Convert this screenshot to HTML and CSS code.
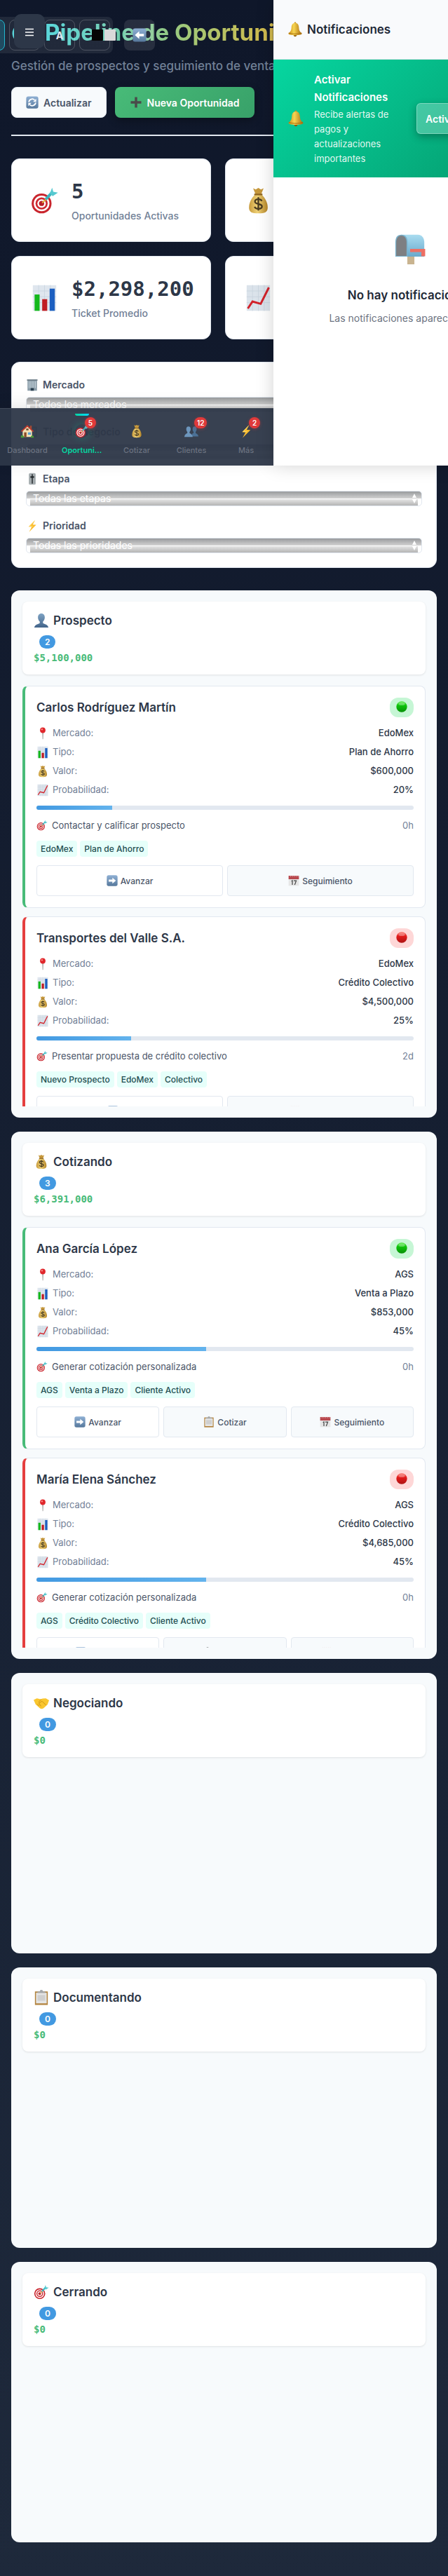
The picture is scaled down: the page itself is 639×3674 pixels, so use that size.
FILE: index.html
```html
<!DOCTYPE html>
<html lang="es">
<head>
<meta charset="utf-8">
<meta name="viewport" content="width=device-width, initial-scale=1">
<title>Pipeline de Oportunidades</title>
<link rel="stylesheet" href="styles.css">
</head>
<body>
<svg class="sprite" aria-hidden="true">
  <defs>
    <linearGradient id="g-blue" x1="0" y1="0" x2="0" y2="1"><stop offset="0" stop-color="#8fb0d4"/><stop offset="1" stop-color="#56789c"/></linearGradient>
    <linearGradient id="g-person" x1="0" y1="0" x2="0" y2="1"><stop offset="0" stop-color="#7fa3c4"/><stop offset="1" stop-color="#42648a"/></linearGradient>
    <linearGradient id="g-gold" x1="0" y1="0" x2="1" y2="0"><stop offset="0" stop-color="#c98a12"/><stop offset=".4" stop-color="#f7d552"/><stop offset="1" stop-color="#a96a0c"/></linearGradient>
    <linearGradient id="g-bag" x1="0" y1="0" x2="1" y2="0"><stop offset="0" stop-color="#c79a3c"/><stop offset=".45" stop-color="#f0d277"/><stop offset="1" stop-color="#b58528"/></linearGradient>
    <linearGradient id="g-green" x1="0" y1="0" x2="0" y2="1"><stop offset="0" stop-color="#4be83c"/><stop offset=".4" stop-color="#0cc20a"/><stop offset="1" stop-color="#089008"/></linearGradient>
    <linearGradient id="g-red" x1="0" y1="0" x2="0" y2="1"><stop offset="0" stop-color="#f86a60"/><stop offset=".4" stop-color="#e11a1a"/><stop offset="1" stop-color="#ad1414"/></linearGradient>
    <linearGradient id="g-box" x1="0" y1="0" x2="0" y2="1"><stop offset="0" stop-color="#a9dcf0"/><stop offset="1" stop-color="#6aa9cc"/></linearGradient>
  </defs>
  <symbol id="target" viewBox="0 0 24 24">
    <circle cx="9.500" cy="14.500" r="8.500" fill="#c9252d"/><circle cx="9.500" cy="14.500" r="6.700" fill="#fff"/><circle cx="9.500" cy="14.500" r="5.200" fill="#cf2a31"/><circle cx="9.500" cy="14.500" r="3.600" fill="#fff"/><circle cx="9.500" cy="14.500" r="2.200" fill="#b81f27"/>
    <path d="M10 14L16 8.500" stroke="#e0b040" stroke-width="1.200"/><path d="M13 11l5.500-6" stroke="#3bb3bd" stroke-width="2.400"/><path d="M16.500 6L18.500 1l1 3.500 4 .7-4.500 3z" fill="#56c9d0"/>
  </symbol>
  <symbol id="target-flat" viewBox="0 0 24 24"><circle cx="9.500" cy="13" r="8.500" fill="#4dd4d8"/><path d="M13 11L18 5l1-3 1 2.500 3 1-4 3-5 5z" fill="#4dd4d8"/></symbol>
  <symbol id="bag" viewBox="0 0 24 24">
    <path d="M7.500 1.500l2.300 1 2.200-1.300 2.200 1.300 2.300-1-2 5h-5z" fill="#c6983c"/><path d="M9 7h6c3 3 5 7 5 11 0 4-2.500 5-8 5s-8-1-8-5c0-4 2-8 5-11z" fill="url(#g-bag)"/><path d="M8.500 6.800h7" stroke="#8e6420" stroke-width="1.400"/>
    <path d="M15 12.500c-.6-1.200-1.700-1.600-3-1.600-1.600 0-2.900.7-2.900 2 0 2.900 6 1.300 6 4.200 0 1.300-1.400 2-3.100 2-1.400 0-2.700-.5-3.200-1.800M12 9.200v11.400" fill="none" stroke="#4b3c20" stroke-width="1.400"/>
  </symbol>
  <symbol id="bars" viewBox="0 0 24 24">
    <path d="M2 1h20v22H2z" fill="#dfe6ee"/><path d="M2 6h20M2 11h20M2 16h20M7 1v22M12 1v22M17 1v22" stroke="#c8d4e0" stroke-width=".5"/>
    <path d="M3.500 9h4.300v14H3.500z" fill="#14b81c"/><path d="M10 13h4.300v10H10z" fill="#c01c22"/><path d="M16.400 4h4.400v19h-4.400z" fill="#1c5fc0"/>
  </symbol>
  <symbol id="trend" viewBox="0 0 24 24">
    <path d="M2 1h20v22H2z" fill="#dbe3eb"/><path d="M2 6h20M2 11h20M2 16h20M7 1v22M12 1v22M17 1v22" stroke="#c8d2dd" stroke-width=".5"/><path d="M3 21l4-6 7 2 7-14" fill="none" stroke="#d2222a" stroke-width="1.800"/>
  </symbol>
  <symbol id="building" viewBox="0 0 24 24">
    <path d="M3 2h18v21H3z" fill="#8a9ca8"/><path d="M2 1.500h20v2.500H2z" fill="#6f7f8a"/><path d="M6 5v13M9 5v13M12 5v13M15 5v13M18 5v13" stroke="#c7d6de" stroke-width="1.300"/><path d="M9 18h6v5H9z" fill="#2b4050"/>
  </symbol>
  <symbol id="page" viewBox="0 0 24 24"><path d="M3 2h18v20H3z" fill="#9aa5b1"/><path d="M6 5h12v14H6z" fill="#dfe6ee"/></symbol>
  <symbol id="slider" viewBox="0 0 24 24">
    <rect x="5.500" y="1" width="13" height="22" rx="2.500" fill="#a9b0b3"/><path d="M8 4v16M16 4v16" stroke="#7b8387" stroke-width="1" stroke-dasharray="1 1.500"/><path d="M12 3v18" stroke="#23282b" stroke-width="2"/><path d="M8.500 8.500h7" stroke="#23282b" stroke-width="3"/>
  </symbol>
  <symbol id="bolt" viewBox="0 0 24 24"><path d="M17.500 1L5 13.500l6 .5-5 9.500L19.500 10l-6.500-.5z" fill="#fbbd2e"/><path d="M16 3L7 12.500l6 .3" fill="none" stroke="#fee27a" stroke-width="1"/></symbol>
  <symbol id="house" viewBox="0 0 24 24">
    <path d="M16.500 2.500h3V8h-3z" fill="#a04a35"/><path d="M4 11l8-7.500 8 7.500v11H4z" fill="#f3dfb4"/><path d="M1 12L12 1.500 23 12l-1.500 1.300L12 4.500l-9.500 8.800z" fill="#c43b2c"/><path d="M6.500 14h4v8h-4z" fill="#8a4a26"/><path d="M13 14h5v4h-5z" fill="#5aa3d6"/><path d="M10 7.500h4v3h-4z" fill="#6e4a35"/><path d="M1 20c2-2 4-1 5 1v2H1zM18 21c1-2 4-2 5 0v2h-5z" fill="#4d9b3a"/>
  </symbol>
  <symbol id="person" viewBox="0 0 24 24"><path d="M12 1c3.500 0 5.300 2.600 5.300 6 0 3-1.300 5.300-2.800 6.700v2.300c2 1.500 8 2 8.500 7H1c.5-5 6.500-5.500 8.500-7v-2.300C8 12.300 6.700 10 6.700 7c0-3.400 1.800-6 5.300-6z" fill="url(#g-person)"/></symbol>
  <symbol id="people" viewBox="0 0 24 24">
    <path d="M17.500 4c2.300 0 3.500 2 3.500 4.500 0 2-.8 3.700-1.800 4.700v2c1.200 1 4.600 1.500 4.800 5.800H12l2-5.500 1.800-.3v-2c-1-1-1.800-2.700-1.800-4.700C14 6 15.200 4 17.500 4z" fill="#4c7196"/><path d="M7 4c2.500 0 3.800 2 3.800 4.500 0 2-.9 3.700-1.900 4.700v2c1.300 1 5 1.500 5.300 6.800H0c.3-5.300 3.700-5.800 5-6.800v-2c-1-1-1.800-2.700-1.800-4.700C3.200 6 4.500 4 7 4z" fill="#6d96bd"/>
  </symbol>
  <symbol id="bell" viewBox="0 0 24 24">
    <circle cx="12" cy="21" r="2.300" fill="#8c5a0c"/><circle cx="12" cy="2" r="1.400" fill="#c78c1a"/><path d="M12 2c4 0 5.500 3 5.800 7 .3 5 1.500 6.500 4.700 9 0 2-3 3-10.500 3S1.500 20 1.500 18c3.200-2.500 4.400-4 4.700-9C6.500 5 8 2 12 2z" fill="url(#g-gold)"/><path d="M2 17.500c5 2 15 2 20 0" fill="none" stroke="#a56d10" stroke-width="1"/>
  </symbol>
  <symbol id="mailbox" viewBox="0 0 24 24">
    <path d="M9.800 17h5.500v7H9.800z" fill="#c9b490"/><path d="M5 1h13c3.500 0 5 3 5 6v11H5z" fill="url(#g-box)"/><path d="M.5 18V7c0-4 1.500-6 4.700-6S10 3 10 7v11z" fill="#7ab2cc"/><path d="M1.200 17.500V7.500c0-3.500 1.200-5.800 4-5.800s4 2.300 4 5.800v10z" fill="#7d7f82"/><path d="M12 12h11.700v5.700h-3V14.500H12z" fill="#ee6f64"/>
  </symbol>
  <symbol id="pin" viewBox="0 0 24 24"><path d="M11.200 10h1.800l-.4 13h-1z" fill="#8f8b88"/><circle cx="12" cy="6" r="5.200" fill="#e0262b"/><circle cx="10.500" cy="4.300" r="1.600" fill="#f78d87"/></symbol>
  <symbol id="next" viewBox="0 0 24 24"><rect x=".5" y=".5" width="23" height="23" rx="4" fill="url(#g-blue)"/><path d="M4.500 9.800h8V5.500l7.500 6.500-7.500 6.500v-4.300h-8z" fill="#fff"/></symbol>
  <symbol id="back" viewBox="0 0 24 24"><rect x=".5" y=".5" width="23" height="23" rx="4" fill="url(#g-blue)"/><path d="M19.500 9.800h-8V5.500L4 12l7.500 6.500v-4.300h8z" fill="#fff"/></symbol>
  <symbol id="refresh" viewBox="0 0 24 24"><rect x=".5" y=".5" width="23" height="23" rx="4" fill="url(#g-blue)"/><path d="M5.500 11.500a6.500 6.500 0 0 1 11-4M18.500 12.500a6.500 6.500 0 0 1-11 4" fill="none" stroke="#fff" stroke-width="2.400"/><path d="M19.500 5v6h-6zM4.500 19v-6h6z" fill="#fff"/></symbol>
  <symbol id="plus" viewBox="0 0 24 24"><path d="M9.700 2h4.600v7.700H22v4.600h-7.700V22H9.700v-7.700H2V9.700h7.700z" fill="#4a4a4a"/></symbol>
  <symbol id="calendar" viewBox="0 0 24 24">
    <path d="M1 3h22v20H1z" fill="#e6e6e6"/><path d="M1 1.500h22V9H1z" fill="#b8474d"/><path d="M5 1v3M9 1v3M13 1v3M17 1v3M21 1v3" stroke="#e8c9c9" stroke-width="1"/><path d="M7 13l2-1.300V21M12 12.200h5.300L14 21" fill="none" stroke="#444" stroke-width="1.800"/>
  </symbol>
  <symbol id="clipboard" viewBox="0 0 24 24"><path d="M2 2.500h20v21H2z" fill="#b3843f"/><path d="M3.700 4.500h16.600V21H3.700z" fill="#e5e5e5"/><path d="M6 8h12v9H6z" fill="#cfcfcf"/><path d="M6 2.500h3.500a2.500 2.500 0 0 1 5 0H18V5H6z" fill="#a5a8ab"/></symbol>
  <symbol id="hands" viewBox="0 0 24 24">
    <path d="M0 7l5-2.500 6 1.500 3-1 5-.5 5 3-2.500 7-6 5.500c-2 1.500-4.500 1.200-6 0L3 14z" fill="#f9c62f"/><path d="M5.500 13.500l3 3M8 12l3.500 5M13 9l6 6M13 9l-3.500 2.500c-1.500 0-1.500-1-1-2L12 6" fill="none" stroke="#c98c14" stroke-width="1"/>
  </symbol>
  <symbol id="green" viewBox="0 0 24 24"><circle cx="12" cy="12" r="11.500" fill="url(#g-green)"/><ellipse cx="12" cy="5.500" rx="7" ry="3.500" fill="#fff" opacity=".3"/></symbol>
  <symbol id="red" viewBox="0 0 24 24"><circle cx="12" cy="12" r="11.500" fill="url(#g-red)"/><ellipse cx="12" cy="5.500" rx="7" ry="3.500" fill="#fff" opacity=".3"/></symbol>
  <symbol id="contrast" viewBox="0 0 36 18"><rect x="1" y="1" width="16" height="16" rx="1" fill="#050505"/><rect x="19" y="1" width="16" height="16" rx="1" fill="#d9d9d9"/></symbol>
</svg>

<div class="page">
  <main class="app">
    <header class="app-header">
      <h1 class="app-title"><svg class="icon title-icon"><use href="#target-flat"/></svg><span class="title-text">Pipeline de Oportunidades</span></h1>
      <p class="app-subtitle">Gestión de prospectos y seguimiento de ventas</p>
      <div class="header-actions">
        <button class="btn btn-light" type="button"><svg class="icon i18"><use href="#refresh"/></svg>Actualizar</button>
        <button class="btn btn-primary" type="button"><svg class="icon i18"><use href="#plus"/></svg>Nueva Oportunidad</button>
      </div>
    </header>

    <section class="stats">
      <article class="stat"><svg class="icon stat-icon"><use href="#target"/></svg><div><div class="stat-value">5</div><div class="stat-label">Oportunidades Activas</div></div></article>
      <article class="stat"><svg class="icon stat-icon"><use href="#bag"/></svg></article>
      <article class="stat"><svg class="icon stat-icon"><use href="#bars"/></svg><div><div class="stat-value">$2,298,200</div><div class="stat-label">Ticket Promedio</div></div></article>
      <article class="stat"><svg class="icon stat-icon"><use href="#trend"/></svg></article>
    </section>

    <section class="filters">
      <div class="filter"><label class="filter-label" for="f-market"><svg class="icon i18"><use href="#building"/></svg>Mercado</label><div class="select-wrap"><select class="select" id="f-market"><option>Todos los mercados</option></select></div></div>
      <div class="filter"><label class="filter-label" for="f-type"><svg class="icon i18"><use href="#page"/></svg>Tipo de Negocio</label><div class="select-wrap"><select class="select" id="f-type"><option></option></select></div></div>
      <div class="filter"><label class="filter-label" for="f-stage"><svg class="icon i18"><use href="#slider"/></svg>Etapa</label><div class="select-wrap"><select class="select" id="f-stage"><option>Todas las etapas</option></select></div></div>
      <div class="filter"><label class="filter-label" for="f-priority"><svg class="icon i18"><use href="#bolt"/></svg>Prioridad</label><div class="select-wrap"><select class="select" id="f-priority"><option>Todas las prioridades</option></select></div></div>
    </section>

    <section class="board">
      <section class="column">
        <header class="column-header"><h2 class="column-title"><svg class="icon i22"><use href="#person"/></svg>Prospecto</h2><span class="count">2</span><div class="column-value">$5,100,000</div></header>
        <div class="cards">
          <article class="card low">
            <header class="card-header"><h3 class="card-title">Carlos Rodríguez Martín</h3><span class="priority"><svg class="icon i16"><use href="#green"/></svg></span></header>
            <dl class="facts">
              <div class="fact"><dt><svg class="icon i18"><use href="#pin"/></svg>Mercado:</dt><dd>EdoMex</dd></div>
              <div class="fact"><dt><svg class="icon i18"><use href="#bars"/></svg>Tipo:</dt><dd>Plan de Ahorro</dd></div>
              <div class="fact"><dt><svg class="icon i18"><use href="#bag"/></svg>Valor:</dt><dd>$600,000</dd></div>
              <div class="fact"><dt><svg class="icon i18"><use href="#trend"/></svg>Probabilidad:</dt><dd>20%</dd></div>
            </dl>
            <div class="progress"><div class="progress-fill" style="width:20%"></div></div>
            <div class="next"><span class="next-text"><svg class="icon i16"><use href="#target"/></svg>Contactar y calificar prospecto</span><span class="age">0h</span></div>
            <div class="tags"><span class="tag">EdoMex</span><span class="tag">Plan de Ahorro</span></div>
            <div class="actions"><button class="action main" type="button"><svg class="icon i16"><use href="#next"/></svg>Avanzar</button><button class="action" type="button"><svg class="icon i16"><use href="#calendar"/></svg>Seguimiento</button></div>
          </article>
          <article class="card high">
            <header class="card-header"><h3 class="card-title">Transportes del Valle S.A.</h3><span class="priority"><svg class="icon i16"><use href="#red"/></svg></span></header>
            <dl class="facts">
              <div class="fact"><dt><svg class="icon i18"><use href="#pin"/></svg>Mercado:</dt><dd>EdoMex</dd></div>
              <div class="fact"><dt><svg class="icon i18"><use href="#bars"/></svg>Tipo:</dt><dd>Crédito Colectivo</dd></div>
              <div class="fact"><dt><svg class="icon i18"><use href="#bag"/></svg>Valor:</dt><dd>$4,500,000</dd></div>
              <div class="fact"><dt><svg class="icon i18"><use href="#trend"/></svg>Probabilidad:</dt><dd>25%</dd></div>
            </dl>
            <div class="progress"><div class="progress-fill" style="width:25%"></div></div>
            <div class="next"><span class="next-text"><svg class="icon i16"><use href="#target"/></svg>Presentar propuesta de crédito colectivo</span><span class="age">2d</span></div>
            <div class="tags"><span class="tag">Nuevo Prospecto</span><span class="tag">EdoMex</span><span class="tag">Colectivo</span></div>
            <div class="actions"><button class="action main" type="button" aria-label="Avanzar"><svg class="icon i16"><use href="#next"/></svg><span class="action-space"></span></button><button class="action" type="button" aria-label="Seguimiento"><svg class="icon i16"><use href="#calendar"/></svg><span class="action-space wide"></span></button></div>
          </article>
        </div>
      </section>

      <section class="column">
        <header class="column-header"><h2 class="column-title"><svg class="icon i22"><use href="#bag"/></svg>Cotizando</h2><span class="count">3</span><div class="column-value">$6,391,000</div></header>
        <div class="cards">
          <article class="card low">
            <header class="card-header"><h3 class="card-title">Ana García López</h3><span class="priority"><svg class="icon i16"><use href="#green"/></svg></span></header>
            <dl class="facts">
              <div class="fact"><dt><svg class="icon i18"><use href="#pin"/></svg>Mercado:</dt><dd>AGS</dd></div>
              <div class="fact"><dt><svg class="icon i18"><use href="#bars"/></svg>Tipo:</dt><dd>Venta a Plazo</dd></div>
              <div class="fact"><dt><svg class="icon i18"><use href="#bag"/></svg>Valor:</dt><dd>$853,000</dd></div>
              <div class="fact"><dt><svg class="icon i18"><use href="#trend"/></svg>Probabilidad:</dt><dd>45%</dd></div>
            </dl>
            <div class="progress"><div class="progress-fill" style="width:45%"></div></div>
            <div class="next"><span class="next-text"><svg class="icon i16"><use href="#target"/></svg>Generar cotización personalizada</span><span class="age">0h</span></div>
            <div class="tags"><span class="tag">AGS</span><span class="tag">Venta a Plazo</span><span class="tag">Cliente Activo</span></div>
            <div class="actions"><button class="action main" type="button"><svg class="icon i16"><use href="#next"/></svg>Avanzar</button><button class="action" type="button"><svg class="icon i16"><use href="#clipboard"/></svg>Cotizar</button><button class="action" type="button"><svg class="icon i16"><use href="#calendar"/></svg>Seguimiento</button></div>
          </article>
          <article class="card high">
            <header class="card-header"><h3 class="card-title">María Elena Sánchez</h3><span class="priority"><svg class="icon i16"><use href="#red"/></svg></span></header>
            <dl class="facts">
              <div class="fact"><dt><svg class="icon i18"><use href="#pin"/></svg>Mercado:</dt><dd>AGS</dd></div>
              <div class="fact"><dt><svg class="icon i18"><use href="#bars"/></svg>Tipo:</dt><dd>Crédito Colectivo</dd></div>
              <div class="fact"><dt><svg class="icon i18"><use href="#bag"/></svg>Valor:</dt><dd>$4,685,000</dd></div>
              <div class="fact"><dt><svg class="icon i18"><use href="#trend"/></svg>Probabilidad:</dt><dd>45%</dd></div>
            </dl>
            <div class="progress"><div class="progress-fill" style="width:45%"></div></div>
            <div class="next"><span class="next-text"><svg class="icon i16"><use href="#target"/></svg>Generar cotización personalizada</span><span class="age">0h</span></div>
            <div class="tags"><span class="tag">AGS</span><span class="tag">Crédito Colectivo</span><span class="tag">Cliente Activo</span></div>
            <div class="actions"><button class="action main" type="button" aria-label="Avanzar"><svg class="icon i16"><use href="#next"/></svg><span class="action-space"></span></button><button class="action" type="button" aria-label="Cotizar"><svg class="icon i16"><use href="#clipboard"/></svg><span class="action-space"></span></button><button class="action" type="button" aria-label="Seguimiento"><svg class="icon i16"><use href="#calendar"/></svg><span class="action-space wide"></span></button></div>
          </article>
        </div>
      </section>

      <section class="column"><header class="column-header"><h2 class="column-title"><svg class="icon i22"><use href="#hands"/></svg>Negociando</h2><span class="count">0</span><div class="column-value">$0</div></header></section>
      <section class="column"><header class="column-header"><h2 class="column-title"><svg class="icon i22"><use href="#clipboard"/></svg>Documentando</h2><span class="count">0</span><div class="column-value">$0</div></header></section>
      <section class="column"><header class="column-header"><h2 class="column-title"><svg class="icon i22"><use href="#target"/></svg>Cerrando</h2><span class="count">0</span><div class="column-value">$0</div></header></section>
    </section>
  </main>

  <div class="toolbar">
    <button class="tool active" type="button" aria-label="Tema"></button>
    <button class="tool" type="button" aria-label="Brillo"></button>
    <button class="tool" type="button">A</button>
    <button class="tool tool-contrast" type="button" aria-label="Contraste"><svg class="icon contrast"><use href="#contrast"/></svg></button>
  </div>
  <button class="back-btn" type="button" aria-label="Volver"><svg class="icon i20"><use href="#back"/></svg></button>
  <button class="menu-btn" type="button" aria-label="Menú"><svg class="icon menu-lines" viewBox="0 0 12 12"><path d="M0 1.500h12M0 6h12M0 10.500h12" stroke="#fff" stroke-width="1.300"/></svg></button>

  <nav class="bottom-nav">
    <a class="nav-item" href="#"><span class="nav-icon"><svg class="icon i20"><use href="#house"/></svg></span><span class="nav-label">Dashboard</span></a>
    <a class="nav-item current" href="#"><span class="nav-icon"><svg class="icon i20"><use href="#target"/></svg><span class="badge">5</span></span><span class="nav-label">Oportunidades</span></a>
    <a class="nav-item" href="#"><span class="nav-icon"><svg class="icon i20"><use href="#bag"/></svg></span><span class="nav-label">Cotizar</span></a>
    <a class="nav-item" href="#"><span class="nav-icon"><svg class="icon i20"><use href="#people"/></svg><span class="badge">12</span></span><span class="nav-label">Clientes</span></a>
    <a class="nav-item" href="#"><span class="nav-icon"><svg class="icon i20"><use href="#bolt"/></svg><span class="badge">2</span></span><span class="nav-label">Más</span></a>
  </nav>

  <aside class="panel">
    <header class="panel-header"><h2 class="panel-title"><svg class="icon i22"><use href="#bell"/></svg>Notificaciones</h2></header>
    <div class="permission">
      <svg class="icon i24"><use href="#bell"/></svg>
      <div class="permission-text"><strong>Activar Notificaciones</strong><p>Recibe alertas de pagos y actualizaciones importantes</p></div>
      <button class="permission-btn" type="button">Activar</button>
    </div>
    <div class="empty"><svg class="icon mailbox"><use href="#mailbox"/></svg><h3>No hay notificaciones</h3><p>Las notificaciones aparecerán aquí</p></div>
  </aside>
</div>
</body>
</html>
```

FILE: styles.css
```css
* { box-sizing: border-box; }
body { margin: 0; font-family: Inter, "Open Sans", sans-serif; color: #2d3748; background: #0f172a; }
h1, h2, h3, p, dl, dd { margin: 0; }
button { font-family: inherit; cursor: pointer; }

.sprite { position: absolute; width: 0; height: 0; }
.icon { flex: none; display: block; }
.i16 { width: 16px; height: 16px; }
.i18 { width: 18px; height: 18px; }
.i20 { width: 20px; height: 20px; }
.i22 { width: 22px; height: 22px; }
.i24 { width: 24px; height: 24px; }

.page { position: relative; overflow: hidden; background: linear-gradient(180deg, #0f172a, #1e293b); }
.app { padding: 16px 16px 48px; display: flex; flex-direction: column; gap: 32px; }

/* Header */
.app-header { padding-bottom: 24px; border-bottom: 2px solid #e2e8f0; }
.app-title { display: flex; align-items: center; gap: 10px; height: 60px; font-size: 33px; line-height: 60px; font-weight: 700; white-space: nowrap; }
.title-icon { width: 38px; height: 38px; }
.title-text { background: linear-gradient(90deg, #4dd4d8, #6fcbab 25%, #a3c876 48%, #cdbb4f 72%, #ffb84d); -webkit-background-clip: text; background-clip: text; color: transparent; }
.app-subtitle { margin: 4px 0 16px; font-size: 17px; line-height: 28px; font-weight: 500; color: #718096; white-space: nowrap; }
.header-actions { display: flex; gap: 12px; }
.btn { display: flex; align-items: center; gap: 7px; height: 44px; padding: 0 20px; border-radius: 8px; font-size: 14px; font-weight: 600; }
.btn-light { border: 1px solid #e2e8f0; background: #f7fafc; color: #4a5568; }
.btn-primary { border: 1px solid transparent; background: linear-gradient(135deg, #48bb78, #38a169) border-box; color: #fff; box-shadow: 0 4px 12px rgba(0, 0, 0, .3); }

/* Stats */
.stats { display: grid; grid-template-columns: repeat(auto-fill, minmax(200px, 285px)); gap: 20px; }
.stat { display: flex; align-items: center; gap: 16px; min-height: 119px; padding: 24px; border: 1px solid #e2e8f0; border-radius: 12px; background: #fff; }
.stat-icon { width: 45px; height: 40px; }
.stat-value { font-family: "DejaVu Sans Mono", monospace; font-size: 29px; line-height: 45px; font-weight: 700; }
.stat-label { font-size: 14px; line-height: 24px; font-weight: 500; color: #718096; white-space: nowrap; }

/* Filters */
.filters { display: grid; gap: 16px; padding: 20px; border: 1px solid #e2e8f0; border-radius: 12px; background: #fff; }
.filter { display: grid; gap: 5px; }
.filter-label { display: flex; align-items: center; gap: 6px; font-size: 14px; line-height: 24px; font-weight: 600; color: #4a5568; }
.select-wrap { position: relative; display: grid; }
.select-wrap::before, .select-wrap::after { content: ""; position: absolute; right: 8px; border: 3px solid transparent; pointer-events: none; }
.select-wrap::before { top: 1px; border-bottom: 6px solid #fff; }
.select-wrap::after { bottom: 1px; border-top: 6px solid #fff; }
.select {
  appearance: none; height: 22px; padding: 0 9px; border: 1px solid #e2e8f0; border-radius: 5px;
  font-family: inherit; font-size: 14px; line-height: 20px; color: #fff;
  background:
    linear-gradient(#999b9d, #d2d2d2) 0 0 / 100% 10px no-repeat,
    linear-gradient(#e6e6e6, #b4b4b4) 5px 11px / calc(100% - 10px) 9px no-repeat,
    #fff;
}

/* Board */
.board { display: grid; gap: 20px; }
.column { min-height: 400px; padding: 16px; border-radius: 12px; background: #f7fafc; }
.column-header { padding: 16px; border-radius: 8px; background: #fff; box-shadow: 0 1px 3px rgba(0, 0, 0, .1); }
.column-title { display: flex; align-items: center; gap: 6px; font-size: 17px; line-height: 22px; font-weight: 600; }
.count { display: block; width: fit-content; margin: 10px 0 5px 8px; padding: 0 8px; border-radius: 10px; background: #4299e1; color: #fff; font-size: 12px; line-height: 19px; font-weight: 600; }
.column-value { font-family: "DejaVu Sans Mono", monospace; font-size: 14px; line-height: 16px; font-weight: 700; color: #48bb78; }
.cards { display: flex; flex-direction: column; gap: 12px; margin-top: 16px; max-height: 600px; overflow: hidden; }

.card { flex: none; padding: 16px; border: 1px solid #e2e8f0; border-left-width: 4px; border-radius: 8px; background: #fff; }
.low { border-left-color: #48bb78; }
.high { border-left-color: #e53e3e; }
.card-header { display: flex; align-items: center; justify-content: space-between; }
.card-title { font-size: 17px; line-height: 28px; font-weight: 600; }
.priority { padding: 5px 9px 7px; border-radius: 12px; background: #c6f6d5; }
.high .priority { background: #fed7d7; }
.facts { display: grid; gap: 6px; margin: 12px 0; }
.fact { display: flex; justify-content: space-between; font-size: 13px; line-height: 21px; }
.fact dt { display: flex; align-items: center; gap: 5px; color: #718096; }
.fact dd { font-weight: 500; }
.progress { height: 6px; border-radius: 3px; background: #e2e8f0; overflow: hidden; }
.progress-fill { height: 100%; background: linear-gradient(90deg, #4299e1, #63b3ed); }
.next { display: flex; justify-content: space-between; margin: 12px 0; font-size: 13px; line-height: 20px; color: #4a5568; }
.next-text { display: flex; align-items: center; gap: 6px; }
.age { color: #718096; }
.tags { display: flex; gap: 4px; margin-bottom: 12px; }
.tag { padding: 0 6px; border-radius: 4px; background: #e6fffa; color: #234e52; font-size: 12px; line-height: 23px; font-weight: 500; }
.actions { display: flex; gap: 6px; }
.action { flex: 1; display: flex; align-items: center; justify-content: center; gap: 4px; height: 44px; padding: 0; border: 1px solid #e2e8f0; border-radius: 4px; background: #f7fafc; color: #4a5568; font-size: 12px; font-weight: 500; }
.main { background: #fff; }
.action-space { width: 45px; }
.wide { width: 70px; }

/* Floating controls */
.toolbar { position: absolute; top: 24px; left: -41px; display: flex; gap: 6px; padding: 4px; border-radius: 8px; background: rgba(255, 255, 255, .08); }
.tool { width: 44px; height: 44px; padding: 0; border: 1px solid rgba(255, 255, 255, .2); border-radius: 8px; background: transparent; color: #e2e8f0; font-size: 14px; font-weight: 700; }
.active { border-color: #22b8cf; background: #204b60; }
.tool-contrast { padding-left: 16px; }
.contrast { width: 36px; height: 18px; }
.back-btn { position: absolute; top: 28px; left: 177px; display: grid; place-items: center; width: 44px; height: 44px; padding: 0; border: 0; border-radius: 8px; background: rgba(255, 255, 255, .1); }
.menu-btn { position: absolute; top: 20px; left: 20px; display: grid; place-items: center; width: 44px; height: 49px; padding: 3px 0 0; border: 0; border-radius: 10px; background: #2d3748; }
.menu-lines { width: 12px; height: 12px; }

.bottom-nav { position: absolute; top: 582px; left: 0; display: grid; grid-template-columns: repeat(5, 1fr); width: 390px; height: 82px; border-top: 1px solid rgba(255, 255, 255, .1); background: rgba(45, 55, 72, .95); box-shadow: 0 -4px 20px rgba(0, 0, 0, .1); }
.nav-item { position: relative; display: flex; flex-direction: column; align-items: center; gap: 9px; min-width: 0; padding: 22px 10px 0; color: #6b7280; text-decoration: none; }
.nav-icon { position: relative; }
.nav-label { max-width: 100%; overflow: hidden; text-overflow: ellipsis; white-space: nowrap; font-size: 11px; line-height: 16px; font-weight: 500; }
.current { color: #06d6a0; }
.current .nav-label { font-weight: 600; }
.current .nav-icon { border-radius: 50%; box-shadow: 0 0 12px rgba(6, 214, 160, .3); }
.current::before { content: ""; position: absolute; top: 7px; width: 20px; height: 3px; border-radius: 0 0 3px 3px; background: linear-gradient(90deg, #06d6a0, #00d9ff); }
.badge { position: absolute; top: -10px; left: 14px; min-width: 16px; padding: 0 4px; border-radius: 8px; background: #e03a3a; color: #fff; font-size: 10px; line-height: 16px; font-weight: 600; text-align: center; box-shadow: 0 1px 4px rgba(224, 58, 58, .4); }

/* Notifications */
.panel { position: absolute; top: 0; left: 390px; width: 390px; height: 664px; background: #fff; box-shadow: 0 0 24px rgba(0, 0, 0, .18); }
.panel-header { height: 85px; padding: 0 20px; border-bottom: 1px solid #e5e7eb; background: #f9fafc; }
.panel-title { display: flex; align-items: center; gap: 6px; height: 84px; font-size: 17px; font-weight: 600; color: #1f2937; }
.permission { display: flex; align-items: center; gap: 14px; padding: 16px 20px; background: linear-gradient(135deg, #06d6a0, #059669); color: #fff; }
.permission-text { flex: 0 0 132px; }
.permission-text strong { display: block; font-size: 15px; line-height: 25px; font-weight: 600; }
.permission-text p { margin-top: 2px; font-size: 13px; line-height: 21px; color: rgba(255, 255, 255, .9); }
.permission-btn { height: 44px; padding: 0 12px; border: 1px solid rgba(255, 255, 255, .3); border-radius: 6px; background: rgba(255, 255, 255, .25); color: #fff; font-size: 14px; font-weight: 600; box-shadow: 0 4px 12px rgba(0, 0, 0, .3); }
.empty { display: flex; flex-direction: column; align-items: center; padding-top: 80px; }
.mailbox { width: 46px; height: 44px; }
.empty h3 { margin-top: 30px; font-size: 17px; line-height: 28px; font-weight: 600; color: #1f2937; }
.empty p { margin-top: 8px; font-size: 14px; line-height: 22px; color: #6b7280; }
```
